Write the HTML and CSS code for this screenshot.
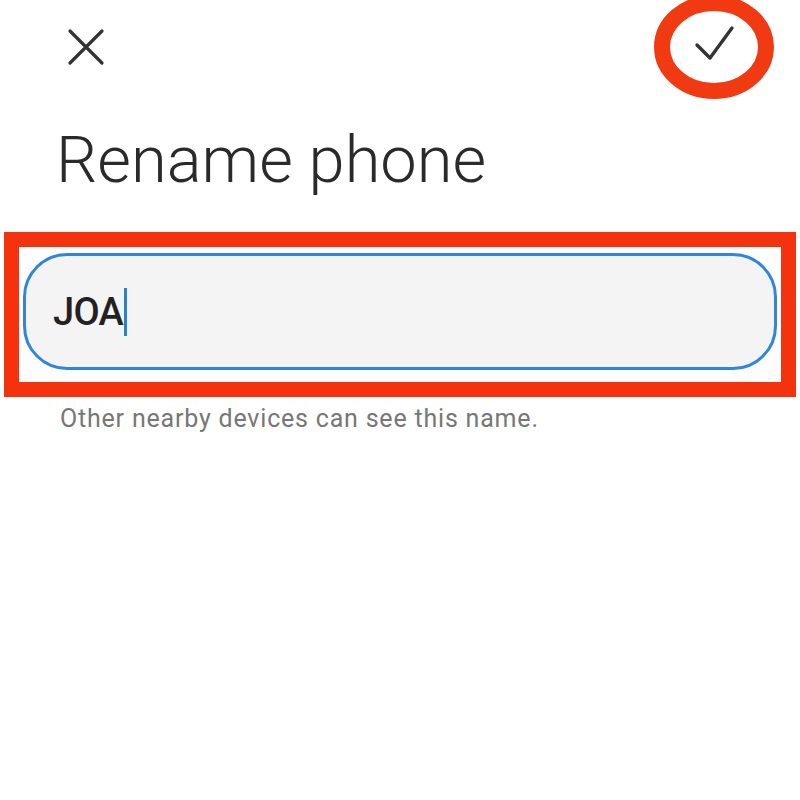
FILE: index.html
```html
<!DOCTYPE html>
<html>
<head>
<meta charset="utf-8">
<link rel="stylesheet" href="styles.css">
</head>
<body>
<div class="screen">
  <div class="topbar">
    <button class="icon-btn close" aria-label="Cancel">
      <svg width="40" height="40" viewBox="0 0 40 40"><path d="M4 4 L36 36 M36 4 L4 36" stroke="#333" stroke-width="3.2" fill="none" stroke-linecap="round"/></svg>
    </button>
    <button class="icon-btn confirm" aria-label="Save">
      <svg width="48" height="48" viewBox="0 0 48 48"><path d="M7 22 L20 35 L42 5" stroke="#333" stroke-width="3.4" fill="none" stroke-linecap="round" stroke-linejoin="round"/></svg>
      <svg class="ring" width="140" height="120" viewBox="0 0 140 120"><ellipse cx="70" cy="59" rx="52" ry="44" stroke="#f23a12" stroke-width="16" fill="none"/></svg>
    </button>
  </div>
  <h1 class="title">Rename phone</h1>
  <div class="highlight">
    <div class="field">
      <span class="value">JOA</span><span class="caret"></span>
    </div>
  </div>
  <p class="hint">Other nearby devices can see this name.</p>
</div>
</body>
</html>
```
FILE: styles.css
```css
html, body {
  margin: 0;
  padding: 0;
  background: #ffffff;
  font-family: Roboto, "Noto Sans", sans-serif;
}
.screen {
  width: 800px;
  height: 800px;
  overflow: hidden;
}
.topbar {
  display: flex;
  justify-content: space-between;
  align-items: center;
  height: 94px;
  padding: 0 62px 0 66px;
}
.icon-btn {
  background: none;
  border: none;
  padding: 0;
  margin: 0;
  display: flex;
  align-items: center;
  justify-content: center;
  position: relative;
}
.close svg { display: block; width: 40px; height: 40px; }
.confirm { width: 48px; height: 48px; }
.confirm svg { display: block; }
.ring {
  position: absolute;
  left: -46px;
  top: -35px;
}
.title {
  margin: 28px 0 0 56px;
  font-size: 65px;
  font-weight: 300;
  color: #2a2a2a;
  line-height: 76px;
}
.highlight {
  margin: 34px 4px 0 4px;
  border: 15px solid #f4330e;
  padding: 6px 4px 12px 4px;
  background: #fdfdfd;
}
.field {
  height: 111px;
  border: 3px solid #2f86dc;
  border-radius: 44px;
  background: #f4f4f4;
  display: flex;
  align-items: center;
  padding-left: 27px;
}
.value {
  font-size: 38px;
  font-weight: 500;
  color: #222;
  letter-spacing: -0.7px;
}
.caret {
  width: 3px;
  height: 48px;
  background: #2a7fd6;
  margin-left: 1px;
}
.hint {
  margin: 7px 0 0 60px;
  font-size: 25px;
  letter-spacing: 0.8px;
  color: #777;
  line-height: 30px;
}
```
